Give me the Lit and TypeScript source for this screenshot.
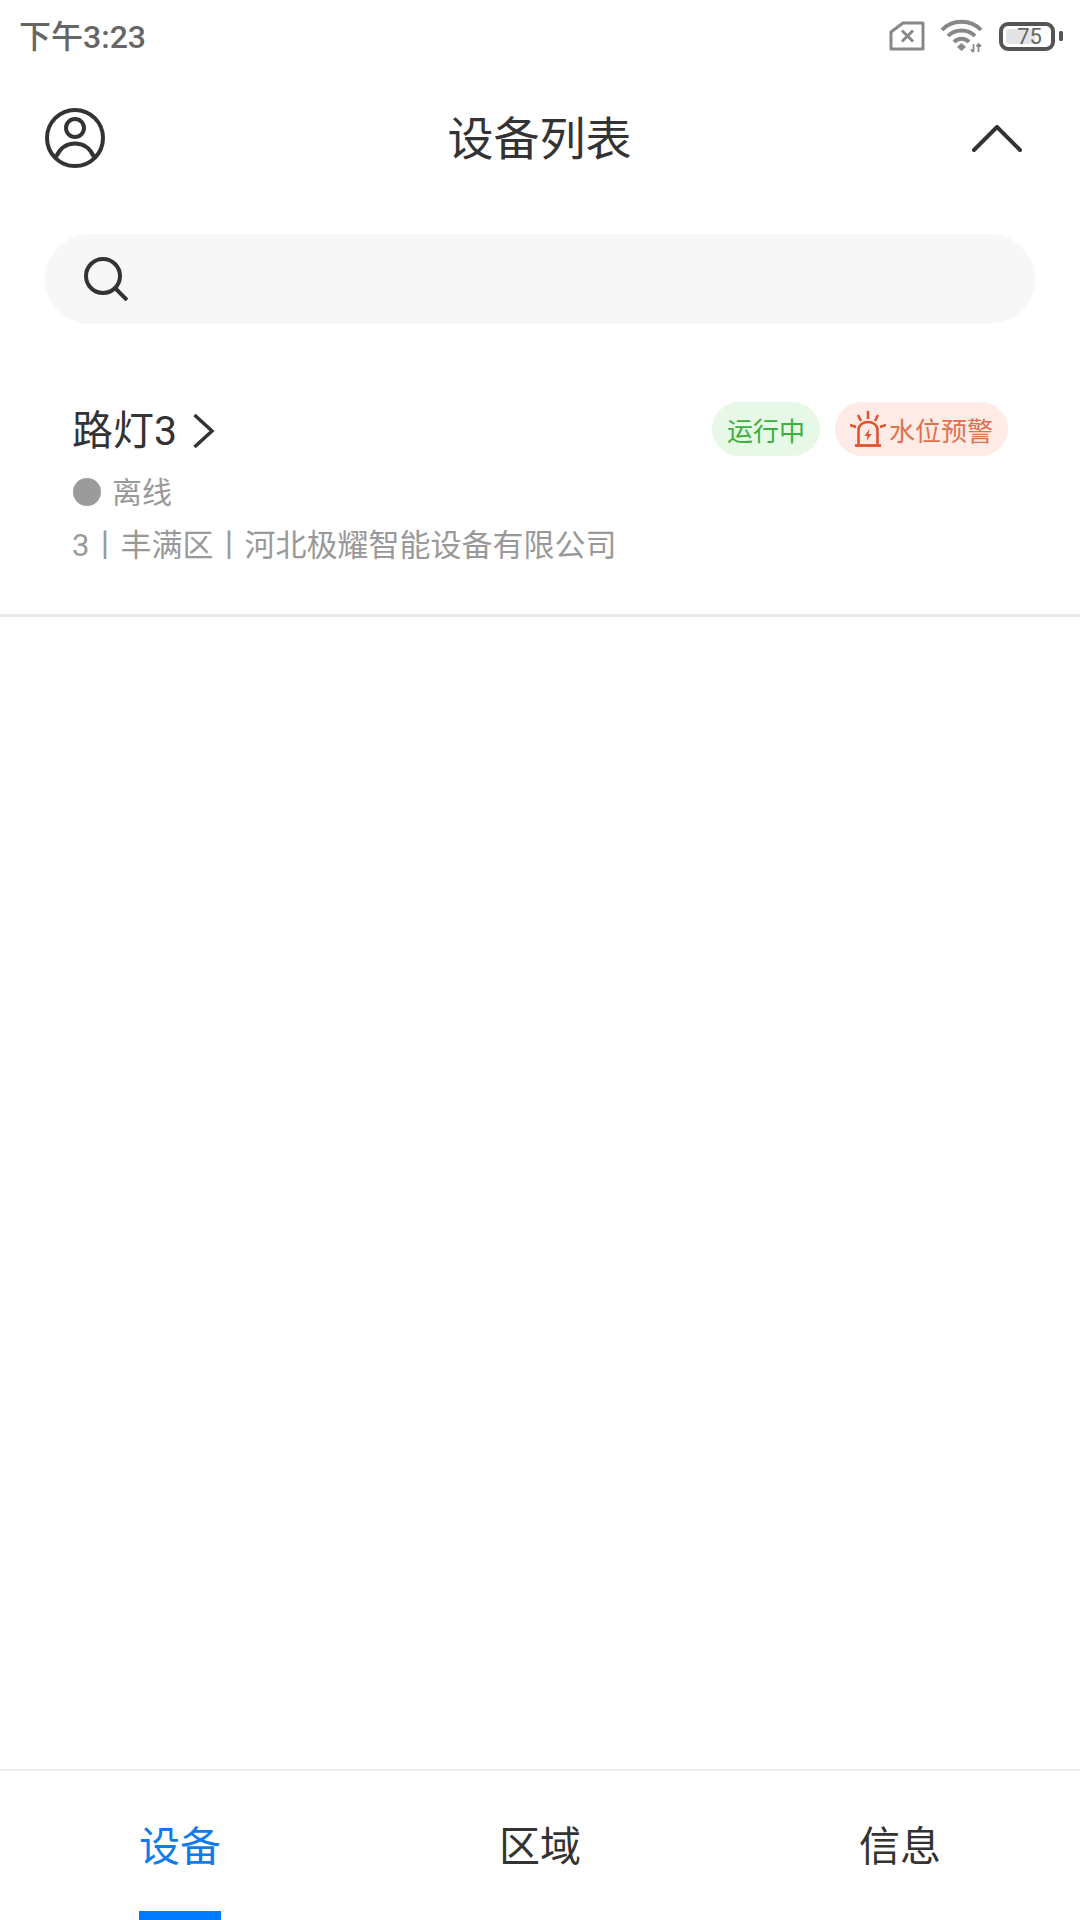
import { LitElement, html, css } from "lit";
import { customElement } from "lit/decorators.js";

@customElement("app-root")
export class AppRoot extends LitElement {
  static styles = css`
    :host {
      display: flex;
      flex-direction: column;
      width: 1080px;
      height: 1920px;
      background: #fff;
      overflow: hidden;
      font-family: Roboto, "Noto Sans CJK SC", sans-serif;
      color: #333;
    }
    svg { display: block; flex: none; }
    .status {
      height: 72px;
      flex: none;
      display: flex;
      align-items: center;
      justify-content: space-between;
      padding: 0 17px 0 19px;
      box-sizing: border-box;
      color: #666;
    }
    .time { font-size: 32px; font-weight: 500; line-height: 72px; padding-top: 2px; }
    .status-icons { display: flex; align-items: center; gap: 15px; }
    .header {
      height: 134px;
      flex: none;
      display: flex;
      align-items: center;
      justify-content: space-between;
      padding: 0 58px 0 45px;
    }
    .avatar { margin-top: -2px; }
    .title { font-size: 46px; line-height: 60px; padding-left: 2px; }
    .search {
      margin: 28px 45px 0;
      height: 90px;
      flex: none;
      border-radius: 45px;
      background: #f7f7f7;
      display: flex;
      align-items: center;
      padding-left: 39px;
    }
    .item {
      margin-top: 78px;
      padding: 0 72px;
      height: 212px;
      flex: none;
      border-bottom: 3px solid #e8e8e8;
    }
    .top { display: flex; justify-content: space-between; align-items: center; height: 54px; }
    .name { display: flex; align-items: center; gap: 15px; font-size: 41px; line-height: 54px; padding-top: 4px; }
    .badges { display: flex; gap: 15px; }
    .badge {
      height: 54px;
      border-radius: 27px;
      display: flex;
      align-items: center;
      font-size: 26px;
      padding: 0 15px;
    }
    .green { background: #e8f8e6; color: #3ab03e; }
    .red { background: #ffebe6; color: #e0704f; gap: 3px; }
    .state { display: flex; align-items: center; gap: 11px; margin-top: 11px; height: 50px; font-size: 30px; color: #999; }
    .state-text { padding-bottom: 4px; }
    .dot { width: 28px; height: 28px; border-radius: 50%; background: #9b9b9b; margin-left: 1px; }
    .info { font-size: 31px; line-height: 44px; color: #999; margin-top: 7px; }
    .spacer { flex: 1; }
    .tabs {
      flex: none;
      height: 151px;
      border-top: 2px solid #eeeeee;
      display: grid;
      grid-template-columns: repeat(3, 1fr);
      box-sizing: border-box;
    }
    .tab {
      position: relative;
      display: flex;
      align-items: center;
      justify-content: center;
      font-size: 41px;
      padding-bottom: 5px;
    }
    .tab.active { color: #107cea; }
    .bar {
      position: absolute;
      bottom: 0;
      left: 139px;
      width: 82px;
      height: 9px;
      background: #007aff;
    }
  `;

  render() {
    return html`
      <div class="status">
        <span class="time">下午3:23</span>
        <div class="status-icons">
          <svg width="36" height="30" viewBox="0 0 36 30" fill="none" stroke="#888" stroke-width="3" stroke-linejoin="round">
            <path d="M14 2H34V28H2V11Z" />
            <path d="M13 9.5L24 20.5M24 9.5L13 20.5" stroke-width="3" />
          </svg>
          <svg width="44" height="34" viewBox="0 0 44 34" fill="none" stroke="#888" stroke-width="4">
            <path d="M2 11C12 0 31 0 41 11" />
            <path d="M8 17C15 9.5 28 9.5 35 17" />
            <path d="M14 23C18 18.5 25 18.5 29 23" />
            <path d="M21.5 24L26 28L21.5 32L17 28Z" fill="#888" stroke="none" />
            <path d="M33.5 25V33M31 30.5L33.5 33M38.5 33V25M36.5 27.5L38.5 25L41 27.5" stroke-width="1.8" />
          </svg>
          <svg width="64" height="30" viewBox="0 0 64 30" fill="none">
            <rect x="2" y="3" width="52" height="25" rx="7" stroke="#555" stroke-width="4" />
            <rect x="7" y="8" width="29" height="15" rx="3" fill="#e4e4e4" />
            <rect x="60" y="10" width="4" height="10" rx="1.5" fill="#555" />
            <text x="30.5" y="23" text-anchor="middle" font-size="22" fill="#666" font-family="Roboto">75</text>
          </svg>
        </div>
      </div>
      <div class="header">
        <svg class="avatar" width="60" height="60" viewBox="0 0 60 60" fill="none" stroke="#333" stroke-width="4">
          <circle cx="30" cy="30" r="28" />
          <circle cx="30" cy="20" r="9" />
          <path d="M11 49C15 40 22 35.5 30 35.5C38 35.5 45 40 49 49" />
        </svg>
        <span class="title">设备列表</span>
        <svg width="50" height="28" viewBox="0 0 50 28" fill="none" stroke="#333" stroke-width="4" stroke-linecap="round" stroke-linejoin="round">
          <path d="M2 25L25 2L48 25" />
        </svg>
      </div>
      <div class="search">
        <svg width="44" height="44" viewBox="0 0 44 44" fill="none" stroke="#333" stroke-width="4">
          <circle cx="19" cy="19" r="17" />
          <path d="M31 31L43 43" />
        </svg>
      </div>
      <div class="item">
        <div class="top">
          <div class="name">
            路灯3
            <svg width="23" height="36" viewBox="0 0 23 36" fill="none" stroke="#333" stroke-width="3.5">
              <path d="M2.5 2L20 18L2.5 34" />
            </svg>
          </div>
          <div class="badges">
            <div class="badge green">运行中</div>
            <div class="badge red">
              <svg width="36" height="36" viewBox="0 0 36 36" fill="none" stroke="#e0502a" stroke-width="2.5">
                <path d="M18 0V8M8 4L11 10M28 4L25 10M0 14L6 16M36 14L30 16" />
                <path d="M8.5 33V19C8.5 14 13 11 18 11C23 11 27.5 14 27.5 19V33" />
                <path d="M5 34.5H31" stroke-width="2.8" />
                <path d="M19.5 18L14.5 25H17.5L16.5 30L21.5 23H18.5Z" fill="#e0502a" stroke="none" />
              </svg>
              水位预警
            </div>
          </div>
        </div>
        <div class="state"><span class="dot"></span><span class="state-text">离线</span></div>
        <div class="info">3丨丰满区丨河北极耀智能设备有限公司</div>
      </div>
      <div class="spacer"></div>
      <div class="tabs">
        <div class="tab active">设备<span class="bar"></span></div>
        <div class="tab">区域</div>
        <div class="tab">信息</div>
      </div>
    `;
  }
}
